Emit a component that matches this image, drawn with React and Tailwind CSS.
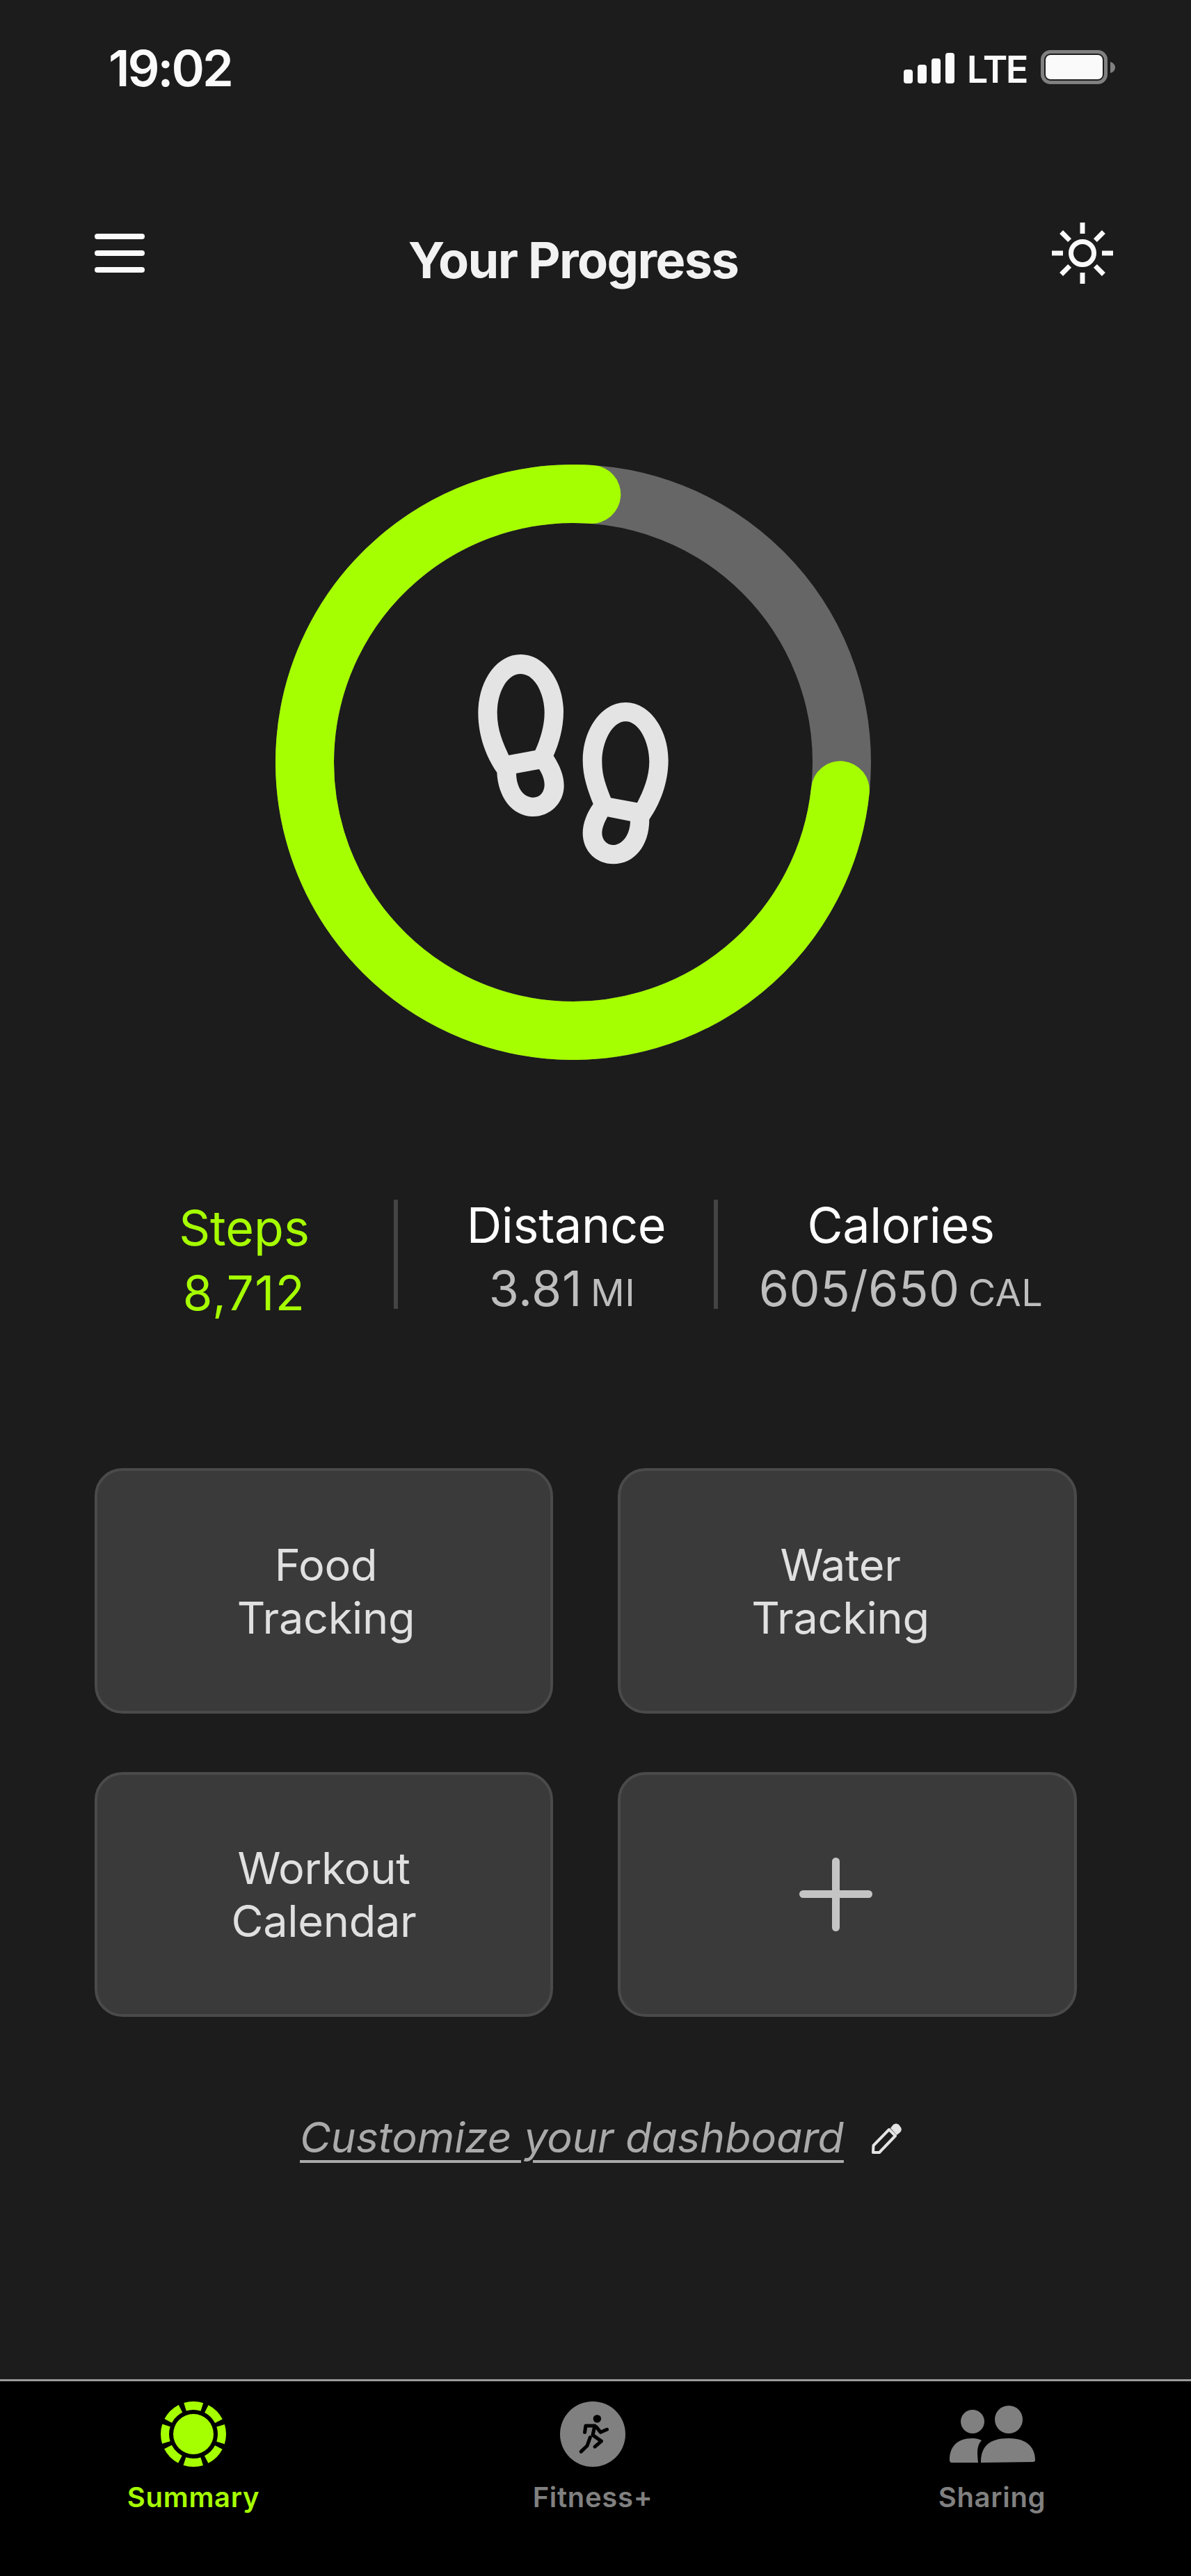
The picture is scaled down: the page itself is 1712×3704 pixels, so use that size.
import React from 'react';

const LIME = '#a6ff00';

function SignalBars() {
  return (
    <div className="flex items-end gap-[7px] h-[44px]">
      <div className="w-[13px] h-[20px] rounded-[4px] bg-[#fafafa]" />
      <div className="w-[13px] h-[27px] rounded-[4px] bg-[#fafafa]" />
      <div className="w-[13px] h-[36px] rounded-[4px] bg-[#fafafa]" />
      <div className="w-[13px] h-[44px] rounded-[4px] bg-[#fafafa]" />
    </div>
  );
}

function Battery() {
  return (
    <div className="flex items-center gap-[4px]">
      <div className="w-[96px] h-[49px] rounded-[14px] border-[5px] border-[#808080] p-[2px]">
        <div className="w-full h-full rounded-[7px] bg-[#fafafa]" />
      </div>
      <svg width="7" height="16" viewBox="0 0 7 16">
        <path d="M0 0 C4 1 7 4 7 8 C7 12 4 15 0 16 Z" fill="#808080" />
      </svg>
    </div>
  );
}

function SunIcon() {
  const rays = [0, 45, 90, 135, 180, 225, 270, 315];
  return (
    <svg width="88" height="88" viewBox="0 0 88 88" className="text-[#fafafa]">
      <circle cx="44" cy="44" r="16.5" fill="none" stroke="currentColor" strokeWidth="7" />
      {rays.map((deg) => (
        <line
          key={deg}
          x1="44"
          y1={deg % 90 === 0 ? 0 : 1}
          x2="44"
          y2={deg % 90 === 0 ? 16 : 18}
          stroke="currentColor"
          strokeWidth="7"
          transform={`rotate(${deg} 44 44)`}
        />
      ))}
    </svg>
  );
}

// progress ring with the two footprints in its middle
function StepsRing() {
  return (
    <svg width="856" height="856" viewBox="0 0 856 856" className="block">
      <circle cx="428" cy="428" r="386" fill="none" stroke="#666666" strokeWidth="84" />
      <path
        d="M811.9 468.3 A386 386 0 1 1 454.3 42.9"
        fill="none"
        stroke={LIME}
        strokeWidth="84"
        strokeLinecap="round"
      />
      <g transform="translate(244 232) scale(0.33333)" fill="#e4e4e4" fillRule="evenodd">
        <path d="M325 123 C430 123 510 240 510 370 C510 440 490 510 467 560 C495 605 512 645 512 690 C512 765 450 822 380 822 C290 822 228 740 223 632 C180 570 142 480 142 375 C142 240 220 123 325 123 Z M325 207 C265 207 224 290 224 375 C224 450 250 505 274 558 L388 537 C410 490 428 430 428 375 C428 290 385 207 325 207 Z M306 636 C307 695 335 740 380 740 C410 740 428 715 428 685 C428 665 420 640 405 618 Z" />
        <path d="M778 330 C880 330 962 445 962 580 C962 680 925 770 880 835 C880 950 815 1027 725 1027 C650 1027 593 970 593 895 C593 850 612 805 638 768 C615 710 593 650 593 580 C593 445 675 330 778 330 Z M778 412 C720 412 676 500 676 585 C676 650 695 690 714 742 L828 763 C855 710 880 650 880 585 C880 500 835 412 778 412 Z M700 823 C688 845 676 870 676 895 C676 920 695 945 722 945 C765 945 797 900 798 842 Z" />
      </g>
    </svg>
  );
}

function Divider() {
  return <div className="w-[6px] h-[157px] shrink-0 bg-[#444444]" />;
}

function StatValue({ value, unit, className }) {
  return (
    <div className={`flex items-baseline justify-center gap-[12px] text-[#bdbdbd] ${className || ''}`}>
      <span className="text-[70px] leading-none tracking-[0.5px]">{value}</span>
      <span className="text-[54px] leading-none tracking-[0.5px]">{unit}</span>
    </div>
  );
}

function Tile({ children, className }) {
  return (
    <div className={`flex items-center justify-center rounded-[40px] border-4 border-[#4a4a4a] bg-[#3a3a3a] text-center text-[63px] leading-[76px] tracking-[-0.3px] text-[#e0e0e0] ${className || ''}`}>
      {children}
    </div>
  );
}

function PencilIcon() {
  return (
    <svg width="45" height="44" viewBox="0 0 45 44" className="mt-[10px] ml-[39px]">
      <path d="M3 42 L3.5 32 L26 9 L35 18 L12 42 Z" fill="none" stroke="#e4e4e4" strokeWidth="4" strokeLinejoin="round" />
      <path d="M28 7 L32 2 Q36 -1 40 2 L43 6 Q45 10 42 13 L37 17 Z" fill="#e4e4e4" />
    </svg>
  );
}

function SummaryIcon() {
  return (
    <svg width="94" height="94" viewBox="0 0 94 94">
      <circle
        cx="47"
        cy="47"
        r="41"
        fill="none"
        stroke={LIME}
        strokeWidth="12"
        strokeDasharray="25.2 7"
        strokeDashoffset="12.6"
        transform="rotate(-90 47 47)"
      />
      <circle cx="47" cy="47" r="29" fill={LIME} />
    </svg>
  );
}

function FitnessIcon() {
  return (
    <svg width="94" height="94" viewBox="196 68 280 280">
      <circle cx="336" cy="208" r="140" fill="#808080" />
      <circle cx="355" cy="142" r="17" fill="#000" />
      <g fill="none" stroke="#000" strokeWidth="15" strokeLinecap="round" strokeLinejoin="round">
        <path d="M302 200 L306 172 L345 172 L336 212 L373 238 L345 262" />
        <path d="M352 178 L370 200 L397 188" />
        <path d="M325 222 L312 258 L286 283" />
      </g>
    </svg>
  );
}

function SharingIcon() {
  return (
    <svg width="123" height="82" viewBox="0 0 123 82" fill="#808080" className="mt-[6px] mb-[6px]">
      <circle cx="33" cy="23" r="17" />
      <circle cx="85" cy="20" r="20" />
      <path d="M3 82 Q0 82 0 78 C0 60 10 47 33 47 C38 47 42 48 46 50 C38 58 40 70 41 82 Z" />
      <path d="M45 82 C45 60 55 47 85 47 C113 47 123 62 123 78 Q123 81 120 81 Z" />
    </svg>
  );
}

function TabItem({ label, active, children }) {
  return (
    <div className="w-[200px] flex flex-col items-center">
      <div className="h-[94px] flex items-center">{children}</div>
      <span className={`mt-[24px] text-[40px] leading-none font-semibold tracking-[0.7px] ${active ? 'text-[#a6ff00]' : 'text-[#808080]'}`}>
        {label}
      </span>
    </div>
  );
}

export default function App() {
  return (
    <div className="w-[1712px] h-[3704px] flex flex-col bg-[#1c1c1c] font-['Inter',sans-serif] text-white overflow-hidden">
      {/* status bar */}
      <div className="h-[320px] flex justify-between items-start pl-[156px] pr-[109px]">
        <span className="mt-[62px] text-[72px] leading-none font-semibold tracking-[-3px] text-[#fafafa]">19:02</span>
        <div className="mt-[72px] flex items-start">
          <div className="mt-[4px]"><SignalBars /></div>
          <span className="mt-[1px] ml-[18px] mr-[20px] text-[54px] leading-none font-semibold tracking-[-2.5px] text-[#fafafa]">LTE</span>
          <Battery />
        </div>
      </div>

      {/* header */}
      <div className="h-[88px] flex justify-between items-start pl-[136px] pr-[112px]">
        <div className="mt-[16px] w-[72px] flex flex-col gap-[16px]">
          <div className="h-[8px] rounded-full bg-[#fafafa]" />
          <div className="h-[8px] rounded-full bg-[#fafafa]" />
          <div className="h-[8px] rounded-full bg-[#fafafa]" />
        </div>
        <h1 className="mt-[18px] mr-[72px] text-[72px] leading-none font-bold tracking-[-1.6px] text-[#f2f2f2]">Your Progress</h1>
        <SunIcon />
      </div>

      <div className="mt-[260px] ml-[396px]">
        <StepsRing />
      </div>

      {/* stats row */}
      <div className="mt-[201px] h-[157px] flex pl-[136px]">
        <div className="w-[430px] text-center text-[#a6ff00]">
          <div className="mt-[6px] text-[70px] leading-none">Steps</div>
          <div className="mt-[24px] text-[69px] leading-none tracking-[1.5px]">8,712</div>
        </div>
        <Divider />
        <div className="w-[454px] pl-[26px] text-center">
          <div className="mt-[2px] pl-[4px] text-[70px] leading-none tracking-[-0.3px]">Distance</div>
          <StatValue value="3.81" unit="MI" className="mt-[21px] pr-[8px]" />
        </div>
        <Divider />
        <div className="w-[526px] text-center">
          <div className="mt-[2px] text-[70px] leading-none tracking-[-0.3px]">Calories</div>
          <StatValue value="605/650" unit="CAL" className="mt-[21px]" />
        </div>
      </div>

      {/* shortcut tiles */}
      <div className="mt-[229px] ml-[136px] grid grid-cols-[659px_660px] grid-rows-[353px_352px] gap-x-[93px] gap-y-[84px]">
        <Tile className="pl-[6px]">Food<br />Tracking</Tile>
        <Tile className="pr-[20px]">Water<br />Tracking</Tile>
        <Tile>Workout<br />Calendar</Tile>
        <Tile className="pr-[33px]">
          <div className="relative w-[105px] h-[106px]">
            <div className="absolute left-0 top-[47px] w-[105px] h-[11px] rounded-full bg-[#c4c4c4]" />
            <div className="absolute left-[47px] top-0 w-[11px] h-[106px] rounded-full bg-[#c4c4c4]" />
          </div>
        </Tile>
      </div>

      <div className="mt-[143px] pl-[431px] flex items-start">
        <span className="text-[61px] leading-none italic text-[#aaaaaa] underline decoration-[4px] underline-offset-[11px]">
          Customize your dashboard
        </span>
        <PencilIcon />
      </div>

      {/* tab bar */}
      <div className="mt-auto h-[283px] shrink-0 border-t-[3px] border-[#9a9a9a] bg-black pt-[29px] pl-[178px] pr-[186px] flex justify-between items-start">
        <TabItem label="Summary" active><SummaryIcon /></TabItem>
        <TabItem label="Fitness+"><FitnessIcon /></TabItem>
        <TabItem label="Sharing"><SharingIcon /></TabItem>
      </div>
    </div>
  );
}
